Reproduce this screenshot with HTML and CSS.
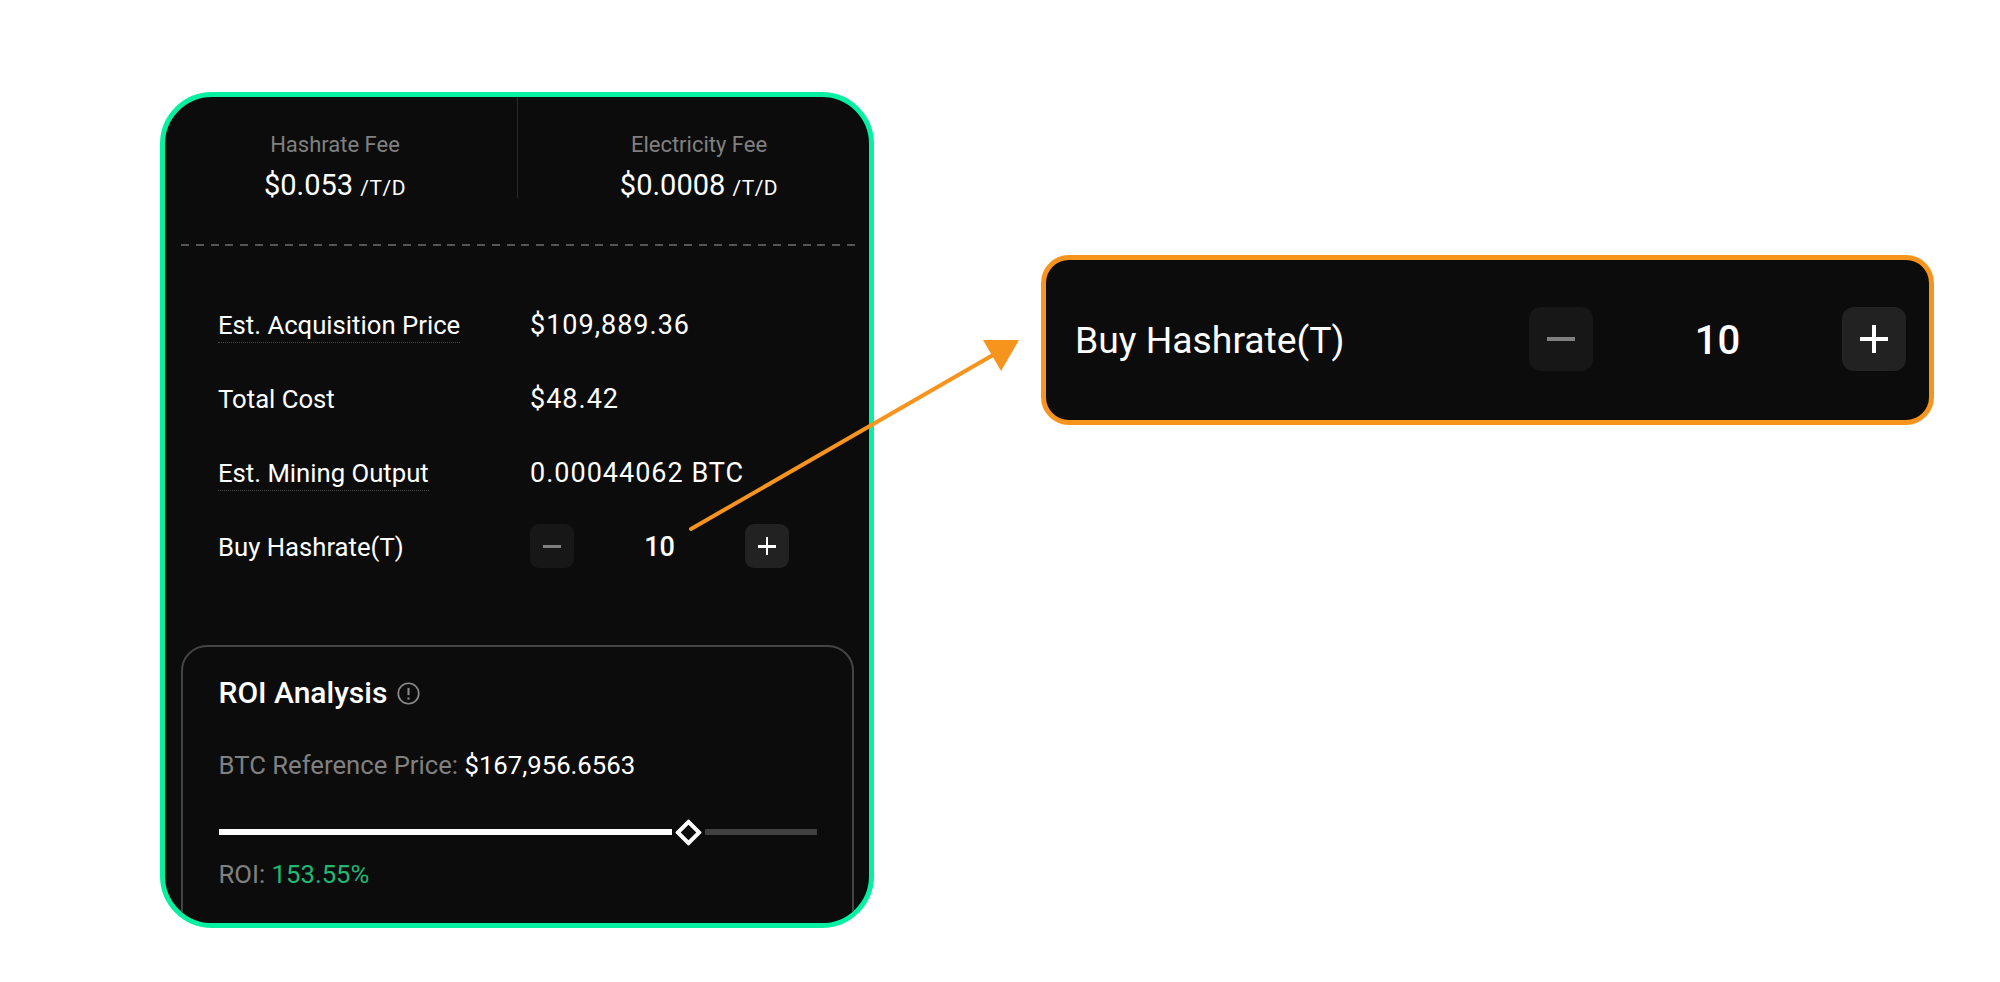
FILE: index.html
```html
<!DOCTYPE html>
<html lang="en">
<head>
  <meta charset="UTF-8" />
  <title>Buy Hashrate</title>
  <link rel="stylesheet" href="styles.css">
</head>
<body>

  <div class="stage">
    <div class="card">
      <div class="fees">
        <div class="fee fee-left">
          <div class="fee-label">Hashrate Fee</div>
          <div class="fee-value">$0.053 <small>/T/D</small></div>
        </div>
        <div class="fee fee-right">
          <div class="fee-label">Electricity Fee</div>
          <div class="fee-value">$0.0008 <small>/T/D</small></div>
        </div>
      </div>
      <div class="dashes"></div>

      <div class="rows">
        <div class="row">
          <div class="row-label"><span class="dotted">Est. Acquisition Price</span></div>
          <div class="row-value">$109,889.36</div>
        </div>
        <div class="row">
          <div class="row-label">Total Cost</div>
          <div class="row-value">$48.42</div>
        </div>
        <div class="row">
          <div class="row-label"><span class="dotted">Est. Mining Output</span></div>
          <div class="row-value">0.00044062 BTC</div>
        </div>
        <div class="row">
          <div class="row-label">Buy Hashrate(T)</div>
          <div class="stepper">
            <div class="step step-off"><span class="bar"></span></div>
            <div class="qty">10</div>
            <div class="step"><span class="bar"></span><span class="bar bar-v"></span></div>
          </div>
        </div>
      </div>

      <div class="roi">
        <div class="roi-title">
          ROI Analysis
          <svg class="roi-icon" viewBox="0 0 22 22" fill="none" stroke="#8a8a8a" stroke-width="1.6">
            <circle cx="11" cy="11" r="9.8"/>
            <path d="M11 5.6v7" stroke-width="2"/>
            <path d="M11 14.8v2" stroke-width="2"/>
          </svg>
        </div>
        <div class="roi-price">BTC Reference Price: <span>$167,956.6563</span></div>
        <div class="slider">
          <div class="slider-fill"></div>
          <div class="slider-thumb"></div>
          <div class="slider-rest"></div>
        </div>
        <div class="roi-result">ROI: <span>153.55%</span></div>
      </div>
    </div>

    <div class="callout">
      <div class="callout-label">Buy Hashrate(T)</div>
      <div class="stepper stepper-big">
        <div class="step step-off"><span class="bar"></span></div>
        <div class="qty">10</div>
        <div class="step"><span class="bar"></span><span class="bar bar-v"></span></div>
      </div>
    </div>

    <!-- arrow from the small stepper to the callout -->
    <svg class="arrow" width="2000" height="982" viewBox="0 0 2000 982">
      <path d="M691 529L993 355" stroke="#f7941d" stroke-width="4" stroke-linecap="round"/>
      <path d="M983 340H1019L1001 371Z" fill="#f7941d"/>
    </svg>
  </div>

</body>
</html>
```

FILE: styles.css
```css
* {
  box-sizing: border-box;
}

body {
  margin: 0;
  background: #fff;
  font-family: Roboto, sans-serif;
  color: #fff;
}

.stage {
  position: relative;
  display: flex;
  align-items: flex-start;
  width: 2000px;
  height: 982px;
  padding: 92px 0 0 160px;
  overflow: hidden;
}

.card {
  width: 714px;
  height: 836px;
  background: #0c0c0c;
  border: 5px solid #05f0a0;
  border-radius: 52px;
  overflow: hidden;
  flex: none;
}

.fees {
  display: flex;
  height: 101px;
}

.fee {
  flex: 1;
  text-align: center;
  padding-top: 35px;
}

.fee-left {
  padding-right: 12px;
  border-right: 1px solid #2a2a2a;
}

.fee-right {
  padding-left: 11px;
}

.fee-label {
  font-size: 22px;
  line-height: 26px;
  color: #808080;
}

.fee-value {
  margin-top: 11px;
  font-size: 29px;
  line-height: 32px;
}

.fee-value small {
  font-size: 21px;
  letter-spacing: 0.5px;
}

.dashes {
  height: 2px;
  margin: 46px 14px 0 16px;
  background: repeating-linear-gradient(to right, #555 0, #555 8px, transparent 8px, transparent 14.8px);
}

.rows {
  margin-top: 42px;
  padding-left: 53px;
}

.row {
  display: flex;
  align-items: center;
  height: 74px;
  font-size: 25.7px;
}

.row-label {
  width: 312px;
  flex: none;
}

.dotted {
  display: inline-block;
  margin-top: 2px;
  padding-bottom: 2px;
  border-bottom: 1px dotted #4a4a4a;
}

.row-value {
  letter-spacing: 1px;
  font-size: 27px;
}

.stepper {
  display: flex;
  align-items: center;
  justify-content: space-between;
  width: 259px;
  margin-top: -2px;
}

.step {
  position: relative;
  width: 44px;
  height: 44px;
  background: #222;
  border-radius: 9px;
}

.step-off {
  background: #171717;
}

.bar {
  position: absolute;
  left: 13px;
  top: 21px;
  width: 18px;
  height: 2.5px;
  background: #fff;
}

.step-off .bar {
  background: #808080;
}

.bar-v {
  left: 21px;
  top: 13px;
  width: 2.5px;
  height: 18px;
}

.qty {
  margin-top: 2px;
  font-size: 27px;
  font-weight: 500;
}

.roi {
  height: 400px;
  margin: 61px 15px 0 16px;
  padding: 26px 35px 0 35.5px;
  background: #0c0c0c;
  border: 2px solid #444;
  border-radius: 26px;
}

.roi-title {
  display: flex;
  align-items: center;
  gap: 10px;
  font-size: 30px;
  font-weight: 500;
  line-height: 40px;
}

.roi-icon {
  width: 23px;
  height: 23px;
}

.roi-price {
  margin-top: 38px;
  font-size: 25.7px;
  line-height: 28px;
  color: #808080;
}

.roi-price span {
  color: #fff;
}

.slider {
  display: flex;
  align-items: center;
  gap: 3px;
  margin-top: 39px;
  height: 28px;
}

.slider-fill {
  width: 455px;
  height: 6px;
  background: #fff;
}

.slider-rest {
  width: 112px;
  height: 6px;
  background: #404040;
}

.slider-thumb {
  width: 19px;
  height: 19px;
  margin: 0 4.5px;
  border: 4px solid #fff;
  border-radius: 1px;
  background: #0c0c0c;
  transform: rotate(45deg);
}

.roi-result {
  margin-top: 14px;
  font-size: 25.7px;
  line-height: 28px;
  color: #808080;
}

.roi-result span {
  color: #1fb877;
}

.callout {
  display: flex;
  align-items: center;
  justify-content: space-between;
  flex: none;
  width: 893px;
  height: 170px;
  margin: 163px 0 0 167px;
  padding: 0 23px 0 29px;
  background: #0c0c0c;
  border: 5px solid #f7941d;
  border-radius: 28px;
}

.callout-label {
  font-size: 37.3px;
}

.stepper-big {
  width: 377px;
}

.stepper-big .step {
  width: 64px;
  height: 64px;
  border-radius: 12px;
}

.stepper-big .bar {
  left: 18px;
  top: 30px;
  width: 28px;
  height: 4px;
}

.stepper-big .bar-v {
  left: 30px;
  top: 18px;
  width: 4px;
  height: 28px;
}

.stepper-big .qty {
  font-size: 40px;
}

.arrow {
  position: absolute;
  left: 0;
  top: 0;
}
```
